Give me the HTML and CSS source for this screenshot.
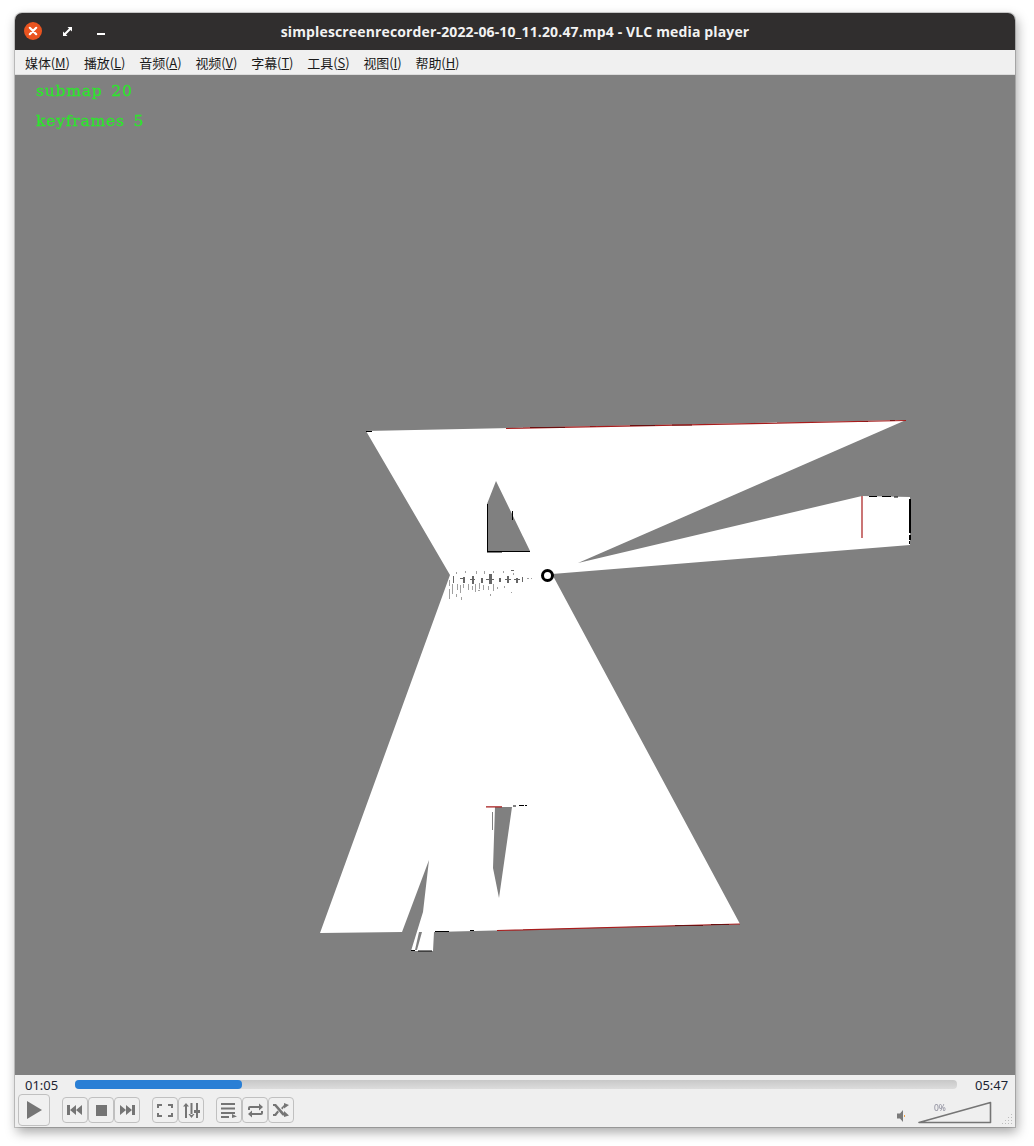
FILE: index.html
```
<!DOCTYPE html>
<html lang="zh">
<head>
<meta charset="utf-8">
<title>VLC media player</title>
<link rel="stylesheet" href="styles.css">
</head>
<body>
<div class="window">
  <header class="titlebar">
    <div class="wm-buttons">
      <span class="wm-close"><svg width="18" height="18" viewBox="0 0 18 18"><circle cx="9" cy="9" r="9" fill="#e95420"/><path d="M5.800 5.800l6.400 6.400M12.200 5.800l-6.400 6.400" stroke="#fff" stroke-width="2.200" stroke-linecap="round"/></svg></span>
      <span class="wm-max"><svg width="9" height="9" viewBox="0 0 9 9"><path d="M4.500 0H9V4.500L7.500 3L3 7.500L4.500 9H0V4.500L1.500 6L6 1.500Z" fill="#fff"/></svg></span>
      <span class="wm-min"></span>
    </div>
    <div class="title">simplescreenrecorder-2022-06-10_11.20.47.mp4 - VLC media player</div>
  </header>
  <nav class="menubar">
    <span class="menu-item">媒体(<u>M</u>)</span>
    <span class="menu-item">播放(<u>L</u>)</span>
    <span class="menu-item">音频(<u>A</u>)</span>
    <span class="menu-item">视频(<u>V</u>)</span>
    <span class="menu-item">字幕(<u>T</u>)</span>
    <span class="menu-item">工具(<u>S</u>)</span>
    <span class="menu-item">视图(<u>I</u>)</span>
    <span class="menu-item">帮助(<u>H</u>)</span>
  </nav>
  <main class="video">
    <svg class="map" width="1000" height="1000" viewBox="15 75 1000 1000">
      <path class="free" d="M366 431L906 420L578 563L862 496L910 497L910 545L552 574L740 924L434 932L433 951L411 951L423 912L429 860L402 932L320 933L450 575Z"/>
      <path class="grey" d="M496 481L487 504V552L530 551ZM495 807H512L499 898L493 868ZM417 950L422 932L419 932L415 950ZM492 812V830H493V812Z"/>
      <path class="wall" d="M487 504h1v48h-1zM487 551h15v1.500h-15zM502 551h28v1h-28zM512 511h1v9h-1zM366 431h6v1h-6zM869 496h8v1h-8zM882 496h9v1h-9zM894 496.500h4v1h-4zM909 499h2v34h-2zM909 535h2v5h-2zM909 541h1v3h-1zM411 950h4v1h-4zM418 950.500h14v1h-14zM435 931h14v1h-14zM470 930h4v1h-4zM513 805.500h3v1h-3zM519 805h5v1h-5zM525 805h2v1h-2zM856 421h12v1h-12zM890 420h5v1h-5zM590 426h6v1h-6z"/>
      <path class="red" d="M506 428.500L906 420.500M862 496V538M486 806.800H502M497 930.500L740 924"/>
      <path class="dark-red" d="M530 427.500h35M630 425.500h25M672 425h20M672 925h0M675 925.500h28M711 924.500h18"/>
      <path class="noise-dark" d="M453 576h1v7h-1zM463 577h2v6h-2zM472 576h2v8h-2zM481 578h2v5h-2zM489 574h3v10h-3zM499 578h2v4h-2zM507 576h2v7h-2zM516 578h2v5h-2zM522 577h1v5h-1zM511 570h3v1h-3zM460 578h4v1h-4zM470 579h5v1h-5zM486 579h8v1h-8zM505 579h6v1h-6zM514 579h6v1h-6z"/>
      <path class="noise-grey" d="M449 580h1v6h-1zM452 584h1v10h-1zM449 589h1v10h-1zM456 572h1v2h-1zM465 571h1v2h-1zM476 571h1v3h-1zM484 571h1v3h-1zM493 571h1v2h-1zM503 571h1v2h-1zM513 573h1v2h-1zM457 584h1v6h-1zM460 585h1v8h-1zM463 584h1v4h-1zM468 584h1v6h-1zM472 586h1v4h-1zM475 584h1v8h-1zM479 583h1v6h-1zM483 585h1v5h-1zM488 586h1v4h-1zM493 584h1v7h-1zM497 587h1v2h-1zM504 586h1v2h-1zM527 578h2v1h-2zM531 578h1v1h-1zM461 597h1v3h-1zM456 594h1v3h-1zM490 594h1v2h-1zM511 592h1v1h-1zM478 590h2v1h-2z"/>
      <circle class="pose" cx="547.500" cy="575.500" r="5"/>
    </svg>
    <div class="overlay">
      <div class="overlay-line">submap 20</div>
      <div class="overlay-line">keyframes 5</div>
    </div>
  </main>
  <footer class="controls">
    <div class="seek-row">
      <span class="time">01:05</span>
      <div class="seek-track"><div class="seek-fill" style="width:18.900%"></div></div>
      <span class="time time-end">05:47</span>
    </div>
    <div class="button-row">
      <button class="btn btn-play"><svg width="16" height="18" viewBox="0 0 16 18"><path d="M1 0L16 9L1 18Z"/></svg></button>
      <div class="btn-group">
        <button class="btn"><svg width="16" height="10" viewBox="0 0 16 10"><path d="M0 0H3V10H0ZM3 5L9 0V10ZM9 5L15 0V10Z"/></svg></button>
        <button class="btn"><svg width="11" height="11" viewBox="0 0 11 11"><path d="M0 0H11V11H0Z"/></svg></button>
        <button class="btn"><svg width="16" height="10" viewBox="0 0 16 10"><path d="M1 0L7 5L1 10ZM7 0L13 5L7 10ZM13 0H16V10H13Z"/></svg></button>
      </div>
      <div class="btn-group">
        <button class="btn"><svg width="16" height="13" viewBox="0 0 16 13"><path d="M0 0H5V2H2V4H0ZM11 0H16V4H14V2H11ZM0 9H2V11H5V13H0ZM14 9H16V13H11V11H14Z"/></svg></button>
        <button class="btn"><svg width="17" height="15" viewBox="0 0 17 15"><path d="M2 3H4V15H2ZM0 3.500L3 0L6 3.500ZM7.500 0H9.500V12H7.500ZM5.500 11L8.500 15L11.500 11ZM13 0H15V15H13ZM11 7H17V10H11Z"/></svg></button>
      </div>
      <div class="btn-group">
        <button class="btn"><svg width="16" height="15" viewBox="0 0 16 15"><path d="M0 0H14V2H0ZM0 4.500H14V6.500H0ZM0 9H14V11H0ZM0 13H8V15H0ZM11 11L16 13.500L11 15Z"/></svg></button>
        <button class="btn"><svg width="17" height="15" viewBox="0 0 17 15"><path d="M1 7V5Q1 3 3 3H12V0.500L16 4L12 7.500V5H3V7ZM16 8V10Q16 12 14 12H5V14.500L1 11L5 7.500V10H14V8Z"/></svg></button>
        <button class="btn"><svg width="16" height="14" viewBox="0 0 16 14"><path d="M0 1H3L11 10V8L16 12.500L11 14V12.500H9.500L1.500 3H0ZM0 11H1.500L4.500 7.500L6 9L3 13H0ZM8 5L11 2V0L16 2L11 5.500V4L9.500 6.500Z"/></svg></button>
      </div>
      <div class="volume">
        <svg class="speaker" width="9" height="12" viewBox="0 0 9 12"><path d="M0 3.500H3L6 0V12L3 8.500H0Z" fill="#7a7a7a"/><path d="M7.500 5V7" stroke="#f0a040" stroke-width="1"/></svg>
        <div class="vol-slider">
          <svg width="74" height="23" viewBox="0 0 74 23"><path d="M1 21.500L72.500 1.500V21.500Z" fill="#efefef" stroke="#757575" stroke-width="1.600" stroke-linejoin="round"/></svg>
          <span class="vol-label">0%</span>
        </div>
      </div>
      <svg class="grip" width="12" height="12" viewBox="0 0 12 12"><path d="M10 1h1v1h-1zM10 4h1v1h-1zM7 4h1v1h-1zM10 7h1v1h-1zM7 7h1v1h-1zM4 7h1v1h-1zM10 10h1v1h-1zM7 10h1v1h-1zM4 10h1v1h-1zM1 10h1v1h-1z" fill="#bdbdbd"/></svg>
    </div>
  </footer>
</div>
</body>
</html>
```
FILE: styles.css
```
* { box-sizing: border-box; }
html, body { margin: 0; padding: 0; background: #fff; }
body {
  width: 1034px;
  height: 1146px;
  padding: 13px 19px 19px 15px;
  overflow: hidden;
  font-family: "Noto Sans", "Noto Sans CJK SC", sans-serif;
}
.window {
  width: 1000px;
  height: 1114px;
  display: flex;
  flex-direction: column;
  border-radius: 7px 7px 0 0;
  overflow: hidden;
  background: #efefef;
  box-shadow: 0 0 0 1px rgba(0,0,0,.18);
  filter: drop-shadow(2px 5px 6px rgba(0,0,0,.35));
}
.titlebar {
  position: relative;
  height: 37px;
  flex: none;
  background: #302e2e;
  display: flex;
  align-items: center;
  justify-content: center;
}
.wm-buttons {
  position: absolute;
  left: 9px;
  top: 9px;
  height: 18px;
  display: flex;
  align-items: center;
}
.wm-close { display: flex; width: 18px; height: 18px; }
.wm-max { display: flex; margin-left: 21px; width: 9px; height: 9px; }
.wm-min { display: block; margin-left: 25px; margin-top: 6px; width: 8px; height: 2px; background: #fff; }
.title {
  color: #f2f2f2;
  font-family: "Open Sans", sans-serif;
  font-weight: 700;
  font-size: 14px;
  letter-spacing: 0.143px;
  white-space: nowrap;
}
.menubar {
  height: 25px;
  flex: none;
  display: flex;
  align-items: center;
  padding: 1px 0 0 10px;
  gap: 14px;
  background: #f0f0f0;
  border-bottom: 1px solid #dcdcdc;
  font-family: "Noto Sans CJK SC", "Noto Sans", sans-serif;
  font-size: 13px;
  color: #1a1a1a;
}
.menu-item { white-space: nowrap; letter-spacing: -0.1px; }
.menu-item u { text-underline-offset: 1px; }
.video {
  position: relative;
  height: 1000px;
  flex: none;
  background: #808080;
}
.map { display: block; }
.free { fill: #fff; }
.grey { fill: #808080; }
.wall { fill: #000; }
.red { fill: none; stroke: #a81c1c; stroke-width: 1.200; }
.dark-red { fill: none; stroke: #6a1010; stroke-width: 1.200; }
.noise-dark { fill: #666; }
.noise-grey { fill: #a0a0a0; }
.pose { fill: #fff; stroke: #000; stroke-width: 3px; }
.overlay { position: absolute; left: 21px; top: 3px; }
.overlay-line {
  height: 30px;
  line-height: 26px;
  color: #2ee62e;
  font-family: "DejaVu Serif", serif;
  font-size: 15.500px;
  letter-spacing: 0.800px;
  word-spacing: 3px;
  white-space: nowrap;
  -webkit-text-stroke: 0.300px #2ee62e;
}
.controls {
  flex: 1;
  display: flex;
  flex-direction: column;
  background: #efefef;
}
.seek-row {
  height: 19px;
  flex: none;
  display: flex;
  align-items: center;
  padding: 0 7px 0 10px;
}
.time { width: 50px; flex: none; font-size: 13px; color: #1c2433; font-family: "Noto Sans", sans-serif; }
.time-end { width: 33px; margin-left: 18px; }
.seek-track {
  flex: 1;
  height: 9px;
  border-radius: 4px;
  background: linear-gradient(#c8c8c8, #dcdcdc);
}
.seek-fill { height: 100%; border-radius: 4px; background: #2a7fd5; }
.button-row {
  flex: 1;
  display: flex;
  align-items: flex-start;
  padding: 0 0 0 3px;
  position: relative;
}
.btn-group { display: flex; margin-top: 3px; margin-left: 12px; }
.btn {
  width: 26px;
  height: 26px;
  padding: 0;
  display: flex;
  align-items: center;
  justify-content: center;
  background: #f0f0f0;
  border: 1px solid #c0c0c0;
  border-radius: 4px;
}
.btn svg { fill: #757575; }
.btn-play { width: 32px; height: 32px; }
.volume {
  margin-left: auto;
  margin-right: 23px;
  margin-top: 7px;
  display: flex;
  align-items: flex-end;
  gap: 12px;
}
.speaker { margin-bottom: 2px; }
.vol-slider { position: relative; width: 74px; height: 23px; }
.vol-slider svg { display: block; }
.vol-label { position: absolute; left: 16px; top: 1px; font-size: 8.500px; color: #8a8a9a; }
.grip { position: absolute; right: 2px; bottom: 2px; }
```
